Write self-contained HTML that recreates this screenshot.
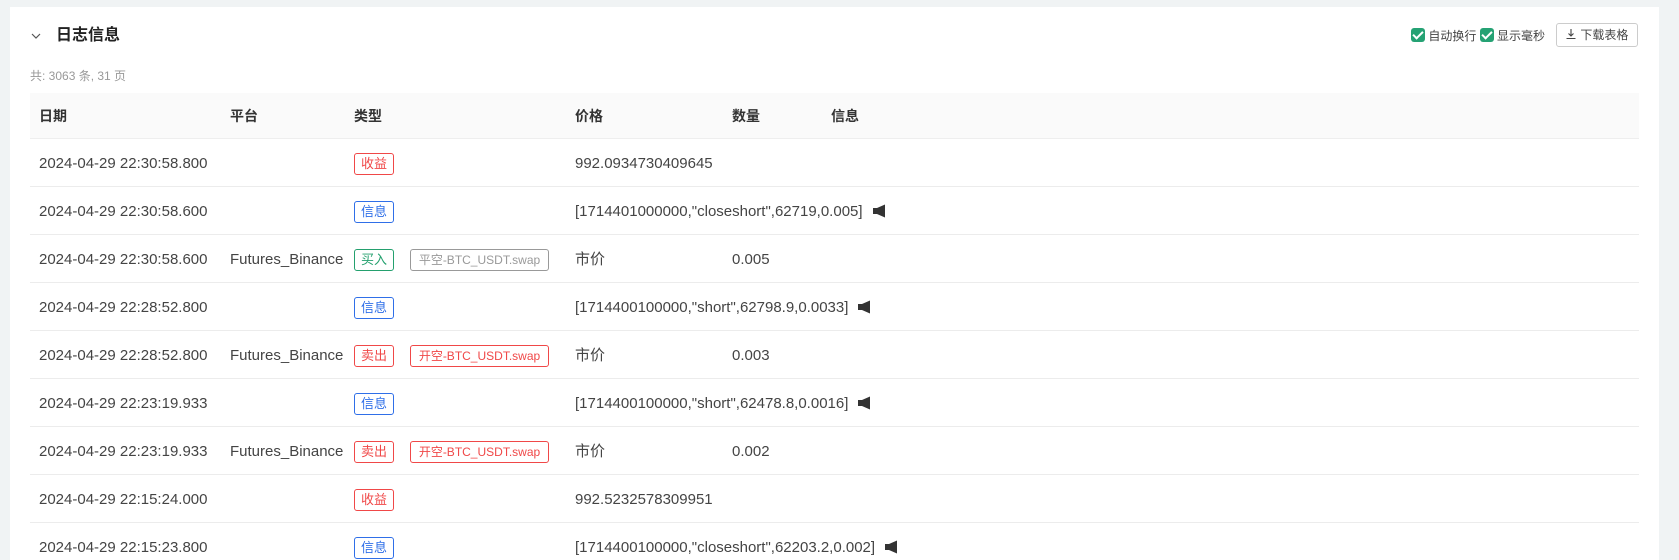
<!DOCTYPE html>
<html><head><meta charset="utf-8"><style>
*{margin:0;padding:0;box-sizing:border-box}
html{width:1679px;height:560px;overflow:hidden}
body{width:1679px;height:560px;background:#f0f3f4;font-family:"Liberation Sans","Noto Sans CJK SC",sans-serif;color:#333;overflow:hidden;position:relative}
.panel{position:absolute;left:10px;top:7px;width:1649px;height:553px;background:#fff}
.abs{position:absolute;white-space:nowrap}
.h{left:56px;top:25px;font-size:16px;font-weight:bold;color:#222;line-height:22px}
.cnt{left:30px;top:67px;font-size:12px;color:#999}
.thead{left:30px;top:93px;width:1609px;height:46px;background:#fafafa;border-bottom:1px solid #eee}
.th{top:93px;line-height:46px;font-size:14px;font-weight:bold;color:#333}
.row{position:absolute;left:30px;width:1609px;height:48px;border-bottom:1px solid #ececec}
.c{position:absolute;top:1px;line-height:48px;font-size:15px;color:#444;white-space:nowrap}
.tag{position:absolute;top:14px;height:22px;border:1px solid;border-radius:3px;font-size:13px;line-height:20px;text-align:center;white-space:nowrap}
.tag.l{font-size:12px}
.red{color:#f04848;border-color:#f04848}
.blue{color:#2f6fe8;border-color:#2f6fe8}
.green{color:#24a06e;border-color:#24a06e}
.gray{color:#999;border-color:#999}
.cb{display:inline-block;width:14px;height:14px;background:#25a274;border-radius:3px;vertical-align:-2px;position:relative}
.cb:after{content:"";position:absolute;left:4px;top:1px;width:4px;height:8px;border:solid #fff;border-width:0 2px 2px 0;transform:rotate(45deg)}
.mg{display:inline-block;vertical-align:-2px;margin-left:9px}
</style></head><body>
<div class="panel"></div>
<svg class="abs" style="left:30px;top:30px" width="12" height="12" viewBox="0 0 12 12"><path d="M2 4l4 4 4-4" fill="none" stroke="#555" stroke-width="1.2"/></svg>
<div class="abs h">日志信息</div>
<div class="abs" style="left:1411px;top:27px;font-size:12px;color:#444"><span class="cb"></span> 自动换行 <span class="cb"></span> 显示毫秒</div>
<div class="abs" style="left:1556px;top:23px;width:82px;height:24px;border:1px solid #ccc;border-radius:3px;font-size:12px;color:#444;line-height:22px;padding-left:8px"><svg width="12" height="12" viewBox="0 0 12 12" style="vertical-align:-1px"><path d="M6 1v7M3.5 5.5L6 8l2.5-2.5M1.5 10.5h9" fill="none" stroke="#444" stroke-width="1.1"/></svg> 下载表格</div>
<div class="abs cnt">共: 3063 条, 31 页</div>
<div class="abs thead"></div>
<div class="abs th" style="left:39px">日期</div>
<div class="abs th" style="left:230px">平台</div>
<div class="abs th" style="left:354px">类型</div>
<div class="abs th" style="left:575px">价格</div>
<div class="abs th" style="left:732px">数量</div>
<div class="abs th" style="left:831px">信息</div>

<div class="row" style="top:139px"><span class="c" style="left:9px">2024-04-29 22:30:58.800</span><span class="tag red" style="left:324px;width:40px">收益</span><span class="c" style="left:545px">992.0934730409645</span></div>
<div class="row" style="top:187px"><span class="c" style="left:9px">2024-04-29 22:30:58.600</span><span class="tag blue" style="left:324px;width:40px">信息</span><span class="c" style="left:545px">[1714401000000,"closeshort",62719,0.005]<svg class="mg" width="15" height="14" viewBox="0 0 15 14"><path d="M1 4h4l8-3.5v13L5 10H1z" fill="#333"/></svg></span></div>
<div class="row" style="top:235px"><span class="c" style="left:9px">2024-04-29 22:30:58.600</span><span class="c" style="left:200px">Futures_Binance</span><span class="tag green" style="left:324px;width:40px">买入</span><span class="tag gray l" style="left:380px;width:139px">平空-BTC_USDT.swap</span><span class="c" style="left:545px">市价</span><span class="c" style="left:702px">0.005</span></div>
<div class="row" style="top:283px"><span class="c" style="left:9px">2024-04-29 22:28:52.800</span><span class="tag blue" style="left:324px;width:40px">信息</span><span class="c" style="left:545px">[1714400100000,"short",62798.9,0.0033]<svg class="mg" width="15" height="14" viewBox="0 0 15 14"><path d="M1 4h4l8-3.5v13L5 10H1z" fill="#333"/></svg></span></div>
<div class="row" style="top:331px"><span class="c" style="left:9px">2024-04-29 22:28:52.800</span><span class="c" style="left:200px">Futures_Binance</span><span class="tag red" style="left:324px;width:40px">卖出</span><span class="tag red l" style="left:380px;width:139px">开空-BTC_USDT.swap</span><span class="c" style="left:545px">市价</span><span class="c" style="left:702px">0.003</span></div>
<div class="row" style="top:379px"><span class="c" style="left:9px">2024-04-29 22:23:19.933</span><span class="tag blue" style="left:324px;width:40px">信息</span><span class="c" style="left:545px">[1714400100000,"short",62478.8,0.0016]<svg class="mg" width="15" height="14" viewBox="0 0 15 14"><path d="M1 4h4l8-3.5v13L5 10H1z" fill="#333"/></svg></span></div>
<div class="row" style="top:427px"><span class="c" style="left:9px">2024-04-29 22:23:19.933</span><span class="c" style="left:200px">Futures_Binance</span><span class="tag red" style="left:324px;width:40px">卖出</span><span class="tag red l" style="left:380px;width:139px">开空-BTC_USDT.swap</span><span class="c" style="left:545px">市价</span><span class="c" style="left:702px">0.002</span></div>
<div class="row" style="top:475px"><span class="c" style="left:9px">2024-04-29 22:15:24.000</span><span class="tag red" style="left:324px;width:40px">收益</span><span class="c" style="left:545px">992.5232578309951</span></div>
<div class="row" style="top:523px"><span class="c" style="left:9px">2024-04-29 22:15:23.800</span><span class="tag blue" style="left:324px;width:40px">信息</span><span class="c" style="left:545px">[1714400100000,"closeshort",62203.2,0.002]<svg class="mg" width="15" height="14" viewBox="0 0 15 14"><path d="M1 4h4l8-3.5v13L5 10H1z" fill="#333"/></svg></span></div>
</body></html>
